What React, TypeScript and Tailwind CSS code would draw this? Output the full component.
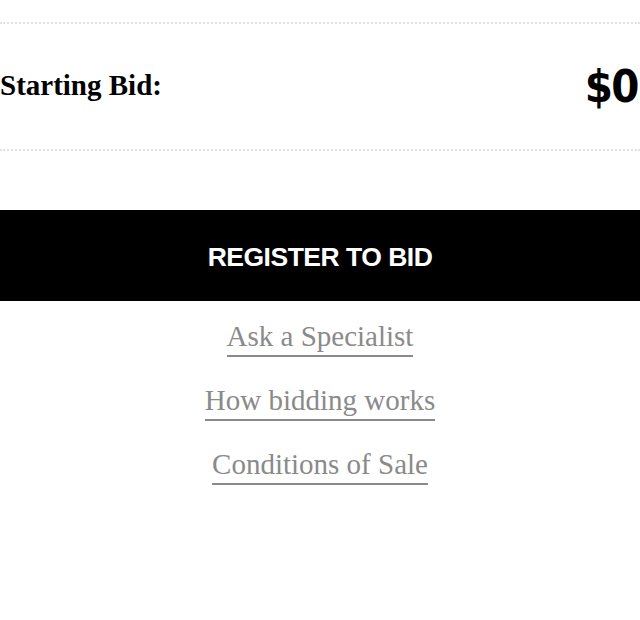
export default function App() {
  return (
    <div className="w-[640px] h-[620px] bg-white overflow-hidden">
      <div className="pt-[22px]">
        <div className="flex items-center justify-between h-[129px] border-t-2 border-b-2 border-dotted border-[#e2e2e2]">
          <span className="font-['Liberation_Serif',serif] font-bold text-[29px] text-black leading-none mt-[-2px]">
            Starting Bid:
          </span>
          <span className="font-['DejaVu_Sans_Condensed','DejaVu_Sans',sans-serif] font-bold text-[45px] text-black leading-none mr-[2px] tracking-[-1.5px]">
            $0
          </span>
        </div>
      </div>
      <div className="mt-[59px] h-[91px] bg-black flex items-center justify-center">
        <span className="font-['Liberation_Sans',sans-serif] font-bold text-[26.5px] text-white tracking-[-0.5px] leading-none mt-[4px]">
          REGISTER TO BID
        </span>
      </div>
      <div className="flex flex-col items-center mt-[21px] gap-[29px] font-['Liberation_Serif',serif] text-[29px] text-[#8a8a8a] leading-none">
        <a href="#" className="border-b-2 border-[#8a8a8a] pb-[4px]">Ask a Specialist</a>
        <a href="#" className="border-b-2 border-[#8a8a8a] pb-[4px]">How bidding works</a>
        <a href="#" className="border-b-2 border-[#8a8a8a] pb-[4px]">Conditions of Sale</a>
      </div>
    </div>
  );
}
